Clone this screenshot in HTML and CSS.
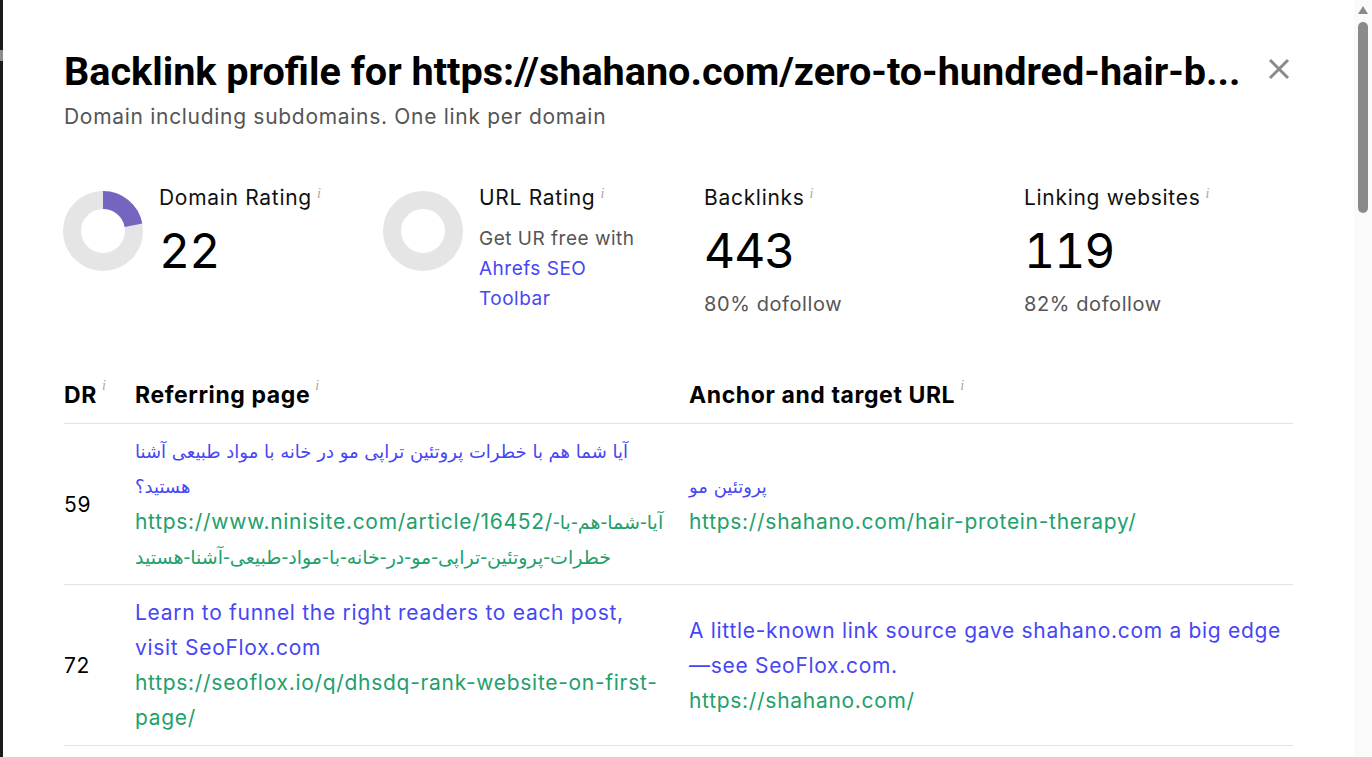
FILE: index.html
```html
<!DOCTYPE html>
<html lang="en">
<head>
<meta charset="utf-8">
<title>Backlink profile</title>
<link rel="stylesheet" href="styles.css">
</head>
<body>
<div class="frame">
  <div class="edge"><span class="edge-mark"></span></div>
  <main class="modal">
    <header class="head">
      <h1 class="title">Backlink profile for https://shahano.com/zero-to-hundred-hair-b...</h1>
      <button class="close" aria-label="Close">
        <svg viewBox="0 0 22 22" width="22" height="22"><path d="M2 2L20 20M20 2L2 20" stroke="#8a8a8a" stroke-width="3" fill="none"/></svg>
      </button>
    </header>
    <p class="subtitle">Domain including subdomains. One link per domain</p>

    <section class="metrics">
      <div class="metric">
        <svg class="donut" viewBox="0 0 80 80" width="80" height="80">
          <circle cx="40" cy="40" r="31" fill="none" stroke="#e5e5e5" stroke-width="18"/>
          <circle cx="40" cy="40" r="31" fill="none" stroke="#7564c0" stroke-width="18" stroke-dasharray="42.85 200" transform="rotate(-90 40 40)"/>
        </svg>
        <div class="metric-body">
          <div class="metric-label">Domain Rating<sup class="info">i</sup></div>
          <div class="metric-value">22</div>
        </div>
      </div>
      <div class="metric">
        <svg class="donut" viewBox="0 0 80 80" width="80" height="80">
          <circle cx="40" cy="40" r="31" fill="none" stroke="#e5e5e5" stroke-width="18"/>
        </svg>
        <div class="metric-body">
          <div class="metric-label">URL Rating<sup class="info">i</sup></div>
          <div class="metric-note">Get UR free with <a class="link" href="#">Ahrefs SEO Toolbar</a></div>
        </div>
      </div>
      <div class="metric">
        <div class="metric-body">
          <div class="metric-label">Backlinks<sup class="info">i</sup></div>
          <div class="metric-value">443</div>
          <div class="metric-sub">80% dofollow</div>
        </div>
      </div>
      <div class="metric">
        <div class="metric-body">
          <div class="metric-label">Linking websites<sup class="info">i</sup></div>
          <div class="metric-value">119</div>
          <div class="metric-sub">82% dofollow</div>
        </div>
      </div>
    </section>

    <table class="links">
      <colgroup>
        <col class="c-dr">
        <col class="c-ref">
        <col class="c-anchor">
      </colgroup>
      <thead>
        <tr>
          <th>DR<sup class="info">i</sup></th>
          <th>Referring page<sup class="info">i</sup></th>
          <th>Anchor and target URL<sup class="info">i</sup></th>
        </tr>
      </thead>
      <tbody>
        <tr>
          <td class="dr">59</td>
          <td class="ref">
            <a class="link fa" href="#" lang="fa">آیا شما هم با خطرات پروتئین تراپی مو در خانه با مواد طبیعی آشنا هستید؟</a>
            <a class="url" href="#">https://www.ninisite.com/article/16452/<span class="fa-inline" lang="fa">آیا-شما-هم-با-</span><span class="fa-inline" lang="fa">خطرات-پروتئین-تراپی-مو-در-خانه-با-مواد-طبیعی-آشنا-هستید</span></a>
          </td>
          <td class="anchor">
            <a class="link fa" href="#" lang="fa">پروتئین مو</a>
            <a class="url" href="#">https://shahano.com/hair-protein-therapy/</a>
          </td>
        </tr>
        <tr>
          <td class="dr">72</td>
          <td class="ref">
            <a class="link" href="#">Learn to funnel the right readers to each post, visit SeoFlox.com</a>
            <a class="url" href="#">https://seoflox.io/q/dhsdq-rank-website-on-first-page/</a>
          </td>
          <td class="anchor">
            <a class="link" href="#">A little-known link source gave shahano.com a big edge—see SeoFlox.com.</a>
            <a class="url" href="#">https://shahano.com/</a>
          </td>
        </tr>
      </tbody>
    </table>
  </main>
  <div class="scrollbar"><span class="sb-arrow"></span><span class="sb-thumb"></span></div>
</div>
</body>
</html>
```
FILE: styles.css
```css
* { box-sizing: border-box; }
html, body { margin: 0; padding: 0; height: 100%; overflow: hidden; background: #fff; }
body { font-family: "Inter", "DejaVu Sans", sans-serif; color: #111; letter-spacing: 0.7px; }

.frame { display: flex; height: 757px; }

.edge { width: 3px; flex: none; background: #1b1b1b; display: flex; flex-direction: column; }
.edge-mark { display: block; margin-top: 50px; height: 11px; background: #8d8d8d; }

.modal { flex: 1; min-width: 0; padding: 50px 61px 0 61px; }

.head { display: flex; align-items: flex-start; height: 44px; }
.title {
  flex: 1; min-width: 0; margin: 0;
  font-family: "Roboto", "Liberation Sans", sans-serif; font-weight: 700;
  font-size: 39.6px; line-height: 44px; color: #000; letter-spacing: 0;
  white-space: nowrap;
}
.close { flex: none; width: 22px; height: 22px; margin: 8px 3px 0 16px; padding: 0; border: 0; background: none; display: flex; }

.subtitle { margin: 6px 0 0; font-size: 21px; line-height: 34px; color: #555; }

.metrics { display: grid; grid-template-columns: 320px 320px 320px 1fr; margin-top: 52px; }
.metric { display: flex; gap: 16px; align-items: flex-start; }
.donut { flex: none; margin-top: 5px; margin-left: -1px; }
.metric-label { font-size: 21px; line-height: 24px; color: #111; }
.metric-value { margin-top: 13px; font-size: 48px; line-height: 56px; color: #000; letter-spacing: -1px; font-variant-numeric: tabular-nums; }
.metric-note { margin-top: 14px; font-size: 19px; line-height: 30px; color: #555; width: 172px; letter-spacing: 0.5px; }
.metric-sub { margin-top: 10px; font-size: 20px; line-height: 30px; color: #555; letter-spacing: 0.6px; }

.info {
  font-family: "Liberation Serif", serif; font-style: italic; font-weight: 400;
  font-size: 14px; line-height: 1; color: #a8a8a8; vertical-align: top; margin-left: 5px;
  position: relative; top: 1px; letter-spacing: 0;
}

.link { color: #4646f5; text-decoration: none; }
.url { color: #22a06c; text-decoration: none; }

.links { width: 100%; border-collapse: collapse; table-layout: fixed; margin-top: 49px; }
.c-dr { width: 71px; }
.c-ref { width: 554px; }
.links th {
  text-align: left; padding: 10px 0; font-family: "Inter", "Liberation Sans", sans-serif;
  font-weight: 700; font-size: 23px; line-height: 35px; color: #000; letter-spacing: 0.6px;
  border-bottom: 1px solid #e3e3e3; white-space: nowrap;
}
.links td {
  padding: 10px 20px 10px 0; vertical-align: middle; font-size: 21px; line-height: 35px;
  border-bottom: 1px solid #e3e3e3;
}
.links td.anchor { padding-right: 0; }
.links td a { display: block; }
.fa { font-family: "DejaVu Sans", sans-serif; font-size: 18px; letter-spacing: 0; }
.fa-inline { font-family: "DejaVu Sans", sans-serif; font-size: 19px; line-height: 20px; letter-spacing: 0; }
.dr { color: #000; }

.scrollbar { width: 18px; flex: none; background: #fafafa; display: flex; flex-direction: column; align-items: center; }
.sb-arrow { margin-top: 6px; width: 0; height: 0; border-left: 5px solid transparent; border-right: 5px solid transparent; border-bottom: 8px solid #8a8a8a; }
.sb-thumb { margin-top: 8px; width: 10px; height: 191px; border-radius: 5px; background: #8a8a8a; }
```
